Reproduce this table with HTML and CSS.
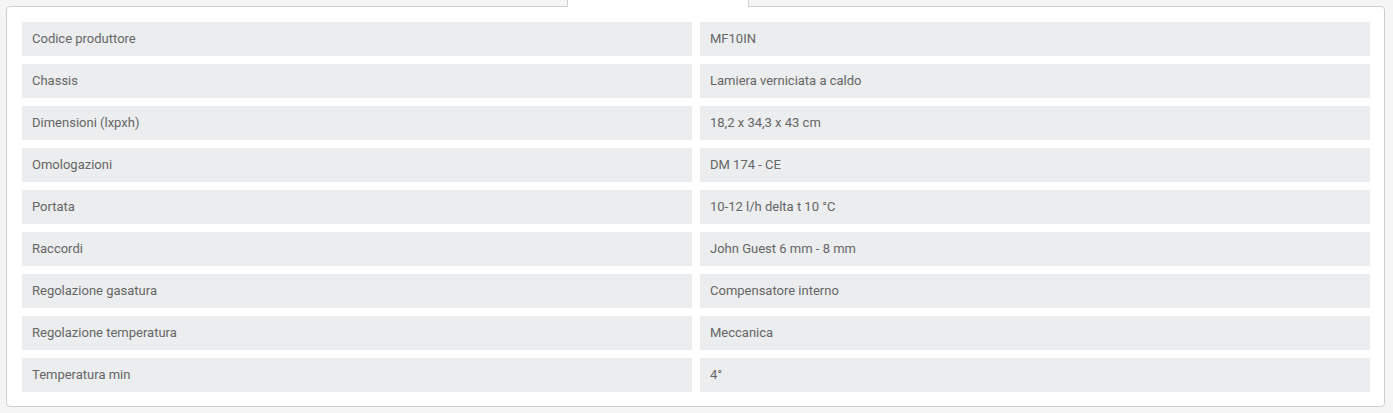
FILE: index.html
```html
<!DOCTYPE html>
<html lang="it">
<head>
<meta charset="utf-8">
<title>Scheda tecnica</title>
<link rel="stylesheet" href="styles.css">
</head>
<body>
<div class="wrap">
  <div class="tabs">
    <div class="tab-active"></div>
  </div>
  <div class="panel">
    <div class="specs">
      <div class="cell">Codice produttore</div><div class="cell">MF10IN</div>
      <div class="cell">Chassis</div><div class="cell">Lamiera verniciata a caldo</div>
      <div class="cell">Dimensioni (lxpxh)</div><div class="cell">18,2 x 34,3 x 43 cm</div>
      <div class="cell">Omologazioni</div><div class="cell">DM 174 - CE</div>
      <div class="cell">Portata</div><div class="cell">10-12 l/h delta t 10 °C</div>
      <div class="cell">Raccordi</div><div class="cell">John Guest 6 mm - 8 mm</div>
      <div class="cell">Regolazione gasatura</div><div class="cell">Compensatore interno</div>
      <div class="cell">Regolazione temperatura</div><div class="cell">Meccanica</div>
      <div class="cell">Temperatura min</div><div class="cell">4°</div>
    </div>
  </div>
</div>
</body>
</html>
```

FILE: styles.css
```css
html, body {
  margin: 0;
  padding: 0;
  background: #f5f5f5;
}
body {
  font-family: Roboto, "Liberation Sans", Arial, sans-serif;
  font-size: 13px;
  color: #666;
}
.wrap {
  padding: 0 8px 6px 6px;
}
.tabs {
  display: flex;
  height: 7px;
  margin-bottom: -1px;
  position: relative;
  z-index: 1;
  padding-left: 561px;
}
.tab-active {
  box-sizing: border-box;
  width: 182px;
  height: 7px;
  background: #fff;
  border-left: 1px solid #cfcfcf;
  border-right: 1px solid #cfcfcf;
}
.panel {
  background: #fff;
  border: 1px solid #cfcfcf;
  border-radius: 4px;
  padding: 15px 14px 14px 15px;
}
.specs {
  display: grid;
  grid-template-columns: 1fr 1fr;
  gap: 8px;
}
.cell {
  background: #ebedee;
  height: 34px;
  line-height: 34px;
  padding: 0 10px;
  white-space: nowrap;
}
```
